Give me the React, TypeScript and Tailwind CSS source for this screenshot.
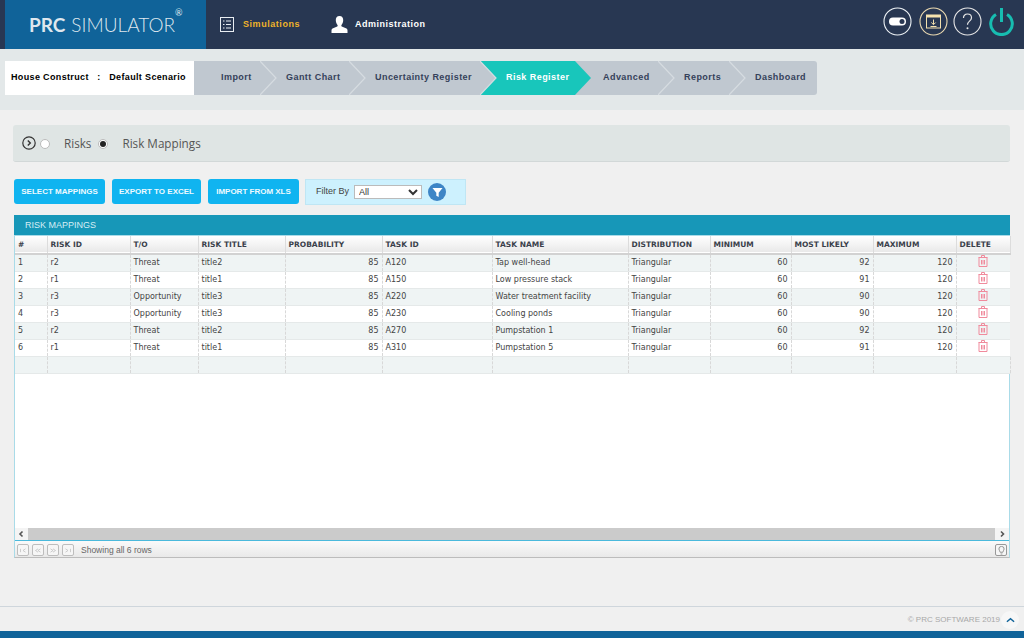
import React from 'react';

const steps = [
  { label: 'Import', width: 'w-[66px]', pad: 'pl-[27px]' },
  { label: 'Gantt Chart', width: 'w-[89px]', pad: 'pl-[26px]' },
  { label: 'Uncertainty Register', width: 'w-[131px]', pad: 'pl-[26px]' },
  { label: 'Risk Register', width: 'w-[95px]', pad: 'pl-[26px]', active: true },
  { label: 'Advanced', width: 'w-[83px]', pad: 'pl-[28px]' },
  { label: 'Reports', width: 'w-[71px]', pad: 'pl-[26px]' },
  { label: 'Dashboard', width: 'w-[88px]', pad: 'pl-[26px]', last: true },
];

const columns = [
  { label: '#', width: 'w-[32px]' },
  { label: 'RISK ID', width: 'w-[83px]' },
  { label: 'T/O', width: 'w-[68px]' },
  { label: 'RISK TITLE', width: 'w-[87px]' },
  { label: 'PROBABILITY', width: 'w-[97px]' },
  { label: 'TASK ID', width: 'w-[110px]' },
  { label: 'TASK NAME', width: 'w-[136px]' },
  { label: 'DISTRIBUTION', width: 'w-[82px]' },
  { label: 'MINIMUM', width: 'w-[81px]' },
  { label: 'MOST LIKELY', width: 'w-[82px]' },
  { label: 'MAXIMUM', width: 'w-[83px]' },
  { label: 'DELETE', width: 'w-[54px]' },
];

const rows = [
  ['1', 'r2', 'Threat', 'title2', '85', 'A120', 'Tap well-head', 'Triangular', '60', '92', '120'],
  ['2', 'r1', 'Threat', 'title1', '85', 'A150', 'Low pressure stack', 'Triangular', '60', '91', '120'],
  ['3', 'r3', 'Opportunity', 'title3', '85', 'A220', 'Water treatment facility', 'Triangular', '60', '90', '120'],
  ['4', 'r3', 'Opportunity', 'title3', '85', 'A230', 'Cooling ponds', 'Triangular', '60', '90', '120'],
  ['5', 'r2', 'Threat', 'title2', '85', 'A270', 'Pumpstation 1', 'Triangular', '60', '92', '120'],
  ['6', 'r1', 'Threat', 'title1', '85', 'A310', 'Pumpstation 5', 'Triangular', '60', '91', '120'],
];

const numeric = [4, 8, 9, 10];

const Trash = () => (
  <svg viewBox="0 0 10 12" className="mx-auto mb-[3px] h-[12px] w-[10px]" fill="none" stroke="#f08a9c" strokeWidth="1">
    <path d="M0.500 2.500h9M3.500 2.500V0.500h3v2M1 2.500V11.500h8V2.500" />
    <path d="M3.500 5v4.500M5 5v4.500M6.500 5v4.500" />
  </svg>
);

const PagerButton = ({ d }: { d: string }) => (
  <div className="flex h-[12px] w-[12px] items-center justify-center rounded-[2px] border border-[#bdbdbd] bg-[#f6f6f6]">
    <svg viewBox="0 0 8 6" className="h-[5px] w-[8px]" fill="none" stroke="#c4c4c4" strokeWidth="1">
      <path d={d} />
    </svg>
  </div>
);

export default function App() {
  return (
    <div className="flex h-[638px] w-[1024px] flex-col overflow-hidden bg-[#f0f0f0] font-['Liberation_Sans',sans-serif]">
      {/* top bar */}
      <header className="flex h-[49px] shrink-0 items-center bg-[#283752] pl-[5px]">
        <div className="relative flex h-full w-[201px] items-center bg-[#106399] pl-[24px] font-['Lato',sans-serif] text-[19px] leading-none text-[#dfe7ee]">
          <span className="font-bold">PRC</span>
          <span className="ml-[6px] font-light">SIMULATOR</span>
          <span className="absolute left-[170px] top-[8px] text-[9px]">®</span>
        </div>
        <svg viewBox="0 0 14 15" className="ml-[14px] h-[15px] w-[14px]" fill="none" stroke="#e8edf2" strokeWidth="1">
          <rect x="0.5" y="0.5" width="13" height="14" />
          <path d="M3 4h1.5M6 4h5M3 7.5h1.5M6 7.5h5M3 11h1.5M6 11h5" strokeWidth="1.2" />
        </svg>
        <span className="ml-[9px] text-[9px] font-bold tracking-[0.55px] text-[#f0b429]">Simulations</span>
        <svg viewBox="0 0 16 17" className="ml-[31px] h-[17px] w-[17px]" fill="#ffffff">
          <path d="M8 0c2.6 0 3.9 2 3.7 4.6-.1 1.6-.8 3.4-1.7 4.4-.3.4-.2 1.2.3 1.5L15 12.600c.7.400 1 1 1 1.800V17H0v-2.600c0-.8.300-1.400 1-1.800l4.700-2.100c.5-.3.6-1.100.3-1.500C5.100 8 4.400 6.200 4.300 4.600 4.100 2 5.400 0 8 0z" />
        </svg>
        <span className="ml-[7px] text-[9px] font-bold tracking-[0.5px] text-white">Administration</span>

        <div className="mb-[7px] ml-auto mr-[10px] flex items-center">
          <svg viewBox="0 0 29 29" className="h-[29px] w-[29px]" fill="none">
            <circle cx="14.500" cy="14.500" r="13.500" stroke="#eef3f6" strokeWidth="1.100" />
            <rect x="6" y="10.500" width="17" height="8" rx="4" fill="#ffffff" />
            <circle cx="19" cy="14.500" r="2.500" fill="#283752" />
          </svg>
          <svg viewBox="0 0 29 29" className="ml-[7px] h-[29px] w-[29px]" fill="none">
            <circle cx="14.500" cy="14.500" r="13.500" stroke="#ead9b0" strokeWidth="1.100" />
            <rect x="7.500" y="8" width="14" height="13" stroke="#f3e1ae" />
            <path d="M7.500 8h14v2.500h-14z" fill="#f3e1ae" />
            <path d="M14.500 12.500v5M12.300 15.500l2.200 2.200 2.200-2.200M11.500 19.500h6" stroke="#f3e1ae" />
          </svg>
          <svg viewBox="0 0 29 29" className="ml-[5px] h-[29px] w-[29px]" fill="none">
            <circle cx="14.500" cy="14.500" r="13.500" stroke="#e6e6e6" strokeWidth="1.100" />
            <path d="M10.500 11c0-2.400 1.700-4 4-4s4 1.500 4 3.700c0 3.300-4 3.600-4 7" stroke="#e6e6e6" strokeWidth="1.200" />
            <circle cx="14.500" cy="21.300" r="1" fill="#e6e6e6" />
          </svg>
          <svg viewBox="0 0 25 29" className="ml-[7px] h-[29px] w-[25px]" fill="none" stroke="#17bdb1" strokeWidth="3">
            <path d="M12.500 1v14" />
            <path d="M7 7.500a10.800 10.800 0 1 0 11 0" />
          </svg>
        </div>
      </header>

      {/* step strip */}
      <div className="flex h-[61px] shrink-0 bg-[#e3e8e9] pl-[5px] pt-[12px]">
        <div className="flex h-[34px] w-[189px] items-center whitespace-pre bg-white pl-[6px] text-[9px] font-bold tracking-[0.35px] text-black">
          House Construct{'   '}:{'   '}Default Scenario
        </div>
        {steps.map(step => (
          <div
            key={step.label}
            className={`relative flex h-[34px] items-center text-[9px] font-bold tracking-[0.45px] ${step.width} ${step.pad} ${step.active ? 'bg-[#18c6bb] text-white' : 'bg-[#c0c8d0] text-[#35415a]'} ${step.last ? 'rounded-r-[3px]' : ''}`}
          >
            <span className="whitespace-nowrap">{step.label}</span>
            {!step.last && (
              <svg viewBox="0 0 17 34" className="absolute left-full top-0 z-10 h-[34px] w-[17px]">
                <path d="M0 0L16 17L0 34z" fill={step.active ? '#18c6bb' : '#c0c8d0'} />
                {!step.active && <path d="M0 0L16 17L0 34" fill="none" stroke="#d6dce1" strokeWidth="1.200" />}
              </svg>
            )}
          </div>
        ))}
      </div>

      <main className="flex flex-col px-[13px] pt-[15px]">
        {/* scope selector */}
        <div className="flex h-[37px] w-[997px] items-center rounded-[3px] border-b border-[#d2d8d8] bg-[#dfe5e4] pl-[9px] pt-[2px] text-[11.700px] text-[#555] font-['Open_Sans',sans-serif]">
          <svg viewBox="0 0 14 14" className="mb-[2px] h-[14px] w-[14px]" fill="none" stroke="#333" strokeWidth="1.200">
            <circle cx="7" cy="7" r="6.200" />
            <path d="M5.800 4.500L8.300 7L5.800 9.500" strokeWidth="1.400" />
          </svg>
          <span className="ml-[4px] h-[10px] w-[10px] rounded-full border border-[#bbb] bg-white" />
          <span className="ml-[14px]">Risks</span>
          <span className="ml-[7px] flex h-[10px] w-[10px] items-center justify-center rounded-full border border-[#bbb] bg-white">
            <span className="h-[6px] w-[6px] rounded-full bg-[#222]" />
          </span>
          <span className="ml-[14px]">Risk Mappings</span>
        </div>

        {/* actions */}
        <div className="mt-[17px] flex h-[26px] items-start pl-px">
          {[
            { label: 'SELECT MAPPINGS', width: 'w-[91px]' },
            { label: 'EXPORT TO EXCEL', width: 'w-[89px]' },
            { label: 'IMPORT FROM XLS', width: 'w-[91px]' },
          ].map(btn => (
            <button
              key={btn.label}
              className={`mr-[7px] flex h-[25px] items-center justify-center whitespace-nowrap rounded-[3px] bg-[#10b4f0] text-[8px] font-bold text-[#eefaff] ${btn.width}`}
            >
              {btn.label}
            </button>
          ))}
          <div className="-ml-px flex h-[26px] w-[161px] items-center border border-[#bfe6f4] bg-[#cdf1fe] pl-[10px] text-[9px] text-[#444]">
            <span>Filter By</span>
            <select className="ml-[5px] h-[14px] w-[68px] border border-[#bbb] bg-white text-[9px] text-[#333]">
              <option>All</option>
            </select>
            <span className="ml-[6px] flex h-[18px] w-[18px] items-center justify-center rounded-full bg-[#3d85c6]">
              <svg viewBox="0 0 12 12" className="h-[11px] w-[11px]" fill="#ffffff">
                <path d="M0.500 1h11L7.300 6.200V11L4.700 9.500V6.200z" />
              </svg>
            </span>
          </div>
        </div>

        {/* grid panel */}
        <section className="ml-px mt-[10px] flex h-[343px] w-[996px] flex-col border-x border-[#a9dbe8] border-b border-b-[#bcbcbc] bg-white">
          <div className="-mx-px flex h-[20px] shrink-0 items-center bg-[#1797b8] pl-[11px] pt-px text-[9px] text-[#d8eef5]">
            RISK MAPPINGS
          </div>
          <div className="min-h-0 flex-1 border-t border-[#a9dbe8]">
            <table className="w-[995px] table-fixed text-[8px] font-['DejaVu_Sans',sans-serif] text-[#444]">
              <colgroup>
                {columns.map(col => (
                  <col key={col.label} className={col.width} />
                ))}
              </colgroup>
              <thead>
                <tr className="h-[18px] border-b-2 border-[#d2d2d2] bg-gradient-to-b from-[#ffffff] to-[#e9e9e9]">
                  {columns.map(col => (
                    <th key={col.label} className="whitespace-nowrap border-r border-[#dcdcdc] px-[3px] text-left text-[7.500px] font-bold text-[#3a3f4a]">
                      {col.label}
                    </th>
                  ))}
                </tr>
              </thead>
              <tbody>
                {rows.map((row, i) => (
                  <tr key={row[0]} className={`h-[17px] border-b border-[#e5e9e9] ${i % 2 === 0 ? 'bg-[#eff4f4]' : 'bg-white'}`}>
                    {row.map((cell, j) => (
                      <td
                        key={j}
                        className={`whitespace-nowrap border-r border-dashed border-[#d8d8d8] px-[3px] ${numeric.includes(j) ? 'text-right' : 'text-left'}`}
                      >
                        {cell}
                      </td>
                    ))}
                    <td>
                      <Trash />
                    </td>
                  </tr>
                ))}
                <tr className="h-[17px] border-b border-[#e5e9e9] bg-[#eff4f4]">
                  {columns.map(col => (
                    <td key={col.label} className="border-r border-dashed border-[#d8d8d8]" />
                  ))}
                </tr>
              </tbody>
            </table>
          </div>
          <div className="flex h-[12px] shrink-0 items-center bg-[#f4f4f4]">
            <svg viewBox="0 0 12 12" className="h-[12px] w-[13px]" fill="none" stroke="#555" strokeWidth="1.600">
              <path d="M7 3.500L4.500 6L7 8.500" />
            </svg>
            <div className="h-full flex-1 bg-[#cbcbcb]" />
            <svg viewBox="0 0 12 12" className="h-[12px] w-[14px]" fill="none" stroke="#555" strokeWidth="1.600">
              <path d="M5 3.500L7.500 6L5 8.500" />
            </svg>
          </div>
          <div className="flex h-[17px] shrink-0 items-center gap-[3px] border-t border-[#4ab9dc] bg-gradient-to-b from-[#fafafa] to-[#e9e9e9] pl-[2px] pr-[2px] pt-[2px]">
            <PagerButton d="M1 1v4M7 1L4 3l3 2" />
            <PagerButton d="M4 1L1 3l3 2M7 1L4 3l3 2" />
            <PagerButton d="M1 1l3 2-3 2M4 1l3 2-3 2" />
            <PagerButton d="M1 1l3 2-3 2M7 1v4" />
            <span className="ml-[4px] text-[8.500px] text-[#666]">Showing all 6 rows</span>
            <div className="ml-auto flex h-[12px] w-[12px] items-center justify-center rounded-[2px] border border-[#999] bg-[#f6f6f6]">
              <svg viewBox="0 0 8 10" className="h-[9px] w-[7px]" fill="none" stroke="#888" strokeWidth="1">
                <path d="M2.500 7C2.500 5.500 1 5 1 3.300a3 3 0 0 1 6 0C7 5 5.500 5.500 5.500 7zM3 9h2" />
              </svg>
            </div>
          </div>
        </section>
      </main>

      {/* footer */}
      <footer className="mt-auto flex h-[25px] shrink-0 items-center justify-end border-t border-[#cfd6dc] pr-[14px] pt-[2px]">
        <span className="text-[8px] text-[#a8a8a8]">© PRC SOFTWARE 2019</span>
        <span className="-mr-[9px] ml-[1px] flex h-[18px] w-[18px] items-center justify-center rounded-full bg-[#f7f7f7]">
          <svg viewBox="0 0 10 6" className="h-[6px] w-[9px]" fill="none" stroke="#106399" strokeWidth="1.600">
            <path d="M1 5L5 1.500L9 5" />
          </svg>
        </span>
      </footer>
      <div className="h-[7px] shrink-0 bg-[#106399]" />
    </div>
  );
}
